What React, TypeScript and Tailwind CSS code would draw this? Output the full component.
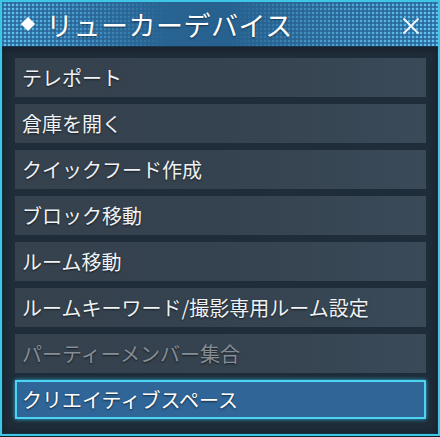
import React from 'react';

const items = [
  { label: 'テレポート' },
  { label: '倉庫を開く' },
  { label: 'クイックフード作成' },
  { label: 'ブロック移動' },
  { label: 'ルーム移動' },
  { label: 'ルームキーワード/撮影専用ルーム設定' },
  { label: 'パーティーメンバー集合', disabled: true },
  { label: 'クリエイティブスペース', active: true },
];

const App = () => {
  return (
    <div className="w-[440px] h-[437px] bg-[#17212c] font-['Noto_Sans_CJK_JP','Noto_Sans',sans-serif]">
      <div className="w-[440px] h-[436px] border-2 border-[#3ec6e6] bg-[#1f2c39] flex flex-col shadow-[inset_0_0_0_1px_#1a5e74]">
        {/* header */}
        <div className="relative h-[45px] shrink-0 bg-[linear-gradient(90deg,#2b6a9d,#27618f_50%,#2b6a9d)] flex items-center border-b border-[#1b3550]">
          <div className="absolute inset-0 bg-[radial-gradient(circle,#62c4f2_1.1px,transparent_1.7px)] bg-[length:4px_4px] bg-[position:1px_1px] [mask-image:linear-gradient(90deg,black_0%,rgba(0,0,0,0.5)_20%,transparent_38%,transparent_52%,rgba(0,0,0,0.6)_75%,black_100%)]" />
          <div className="relative flex items-center pl-[19px] gap-[13px]">
            <div className="w-[10px] h-[10px] bg-white rotate-45 ml-[2px]" />
            <span className="text-[27px] leading-none text-white tracking-[0.5px] [text-shadow:0_1px_2px_rgba(0,0,0,0.5)]">
              リューカーデバイス
            </span>
          </div>
          <svg className="absolute right-[18px] top-[15px]" width="18" height="18" viewBox="0 0 18 18">
            <path d="M2 2 L16 16 M16 2 L2 16" stroke="#f4f8fb" strokeWidth="1.8" strokeLinecap="round" />
          </svg>
        </div>

        {/* menu */}
        <div className="flex-1 pt-[11px] pl-[13px] pr-[12px] flex flex-col gap-[7px] shadow-[inset_0_0_6px_2px_#16202a]">
          {items.map((it) =>
            it.active ? (
              <div
                key={it.label}
                className="h-[39px] border-2 border-[#4fd3f2] bg-[#2f6597] flex items-center pl-[5px] text-[20px] text-white shadow-[0_0_4px_#2bb7e0] [text-shadow:0_1px_2px_rgba(0,0,0,0.6)]"
              >
                {it.label}
              </div>
            ) : (
              <div
                key={it.label}
                className={`h-[39px] bg-[linear-gradient(90deg,#36424e,#35424f_50%,#3a4a58)] flex items-center pl-[7px] text-[20px] [text-shadow:0_1px_2px_rgba(0,0,0,0.6)] ${
                  it.disabled ? 'text-[#858e97]' : 'text-[#eef2f5]'
                }`}
              >
                {it.label}
              </div>
            )
          )}
        </div>
      </div>
    </div>
  );
};

export default App;
